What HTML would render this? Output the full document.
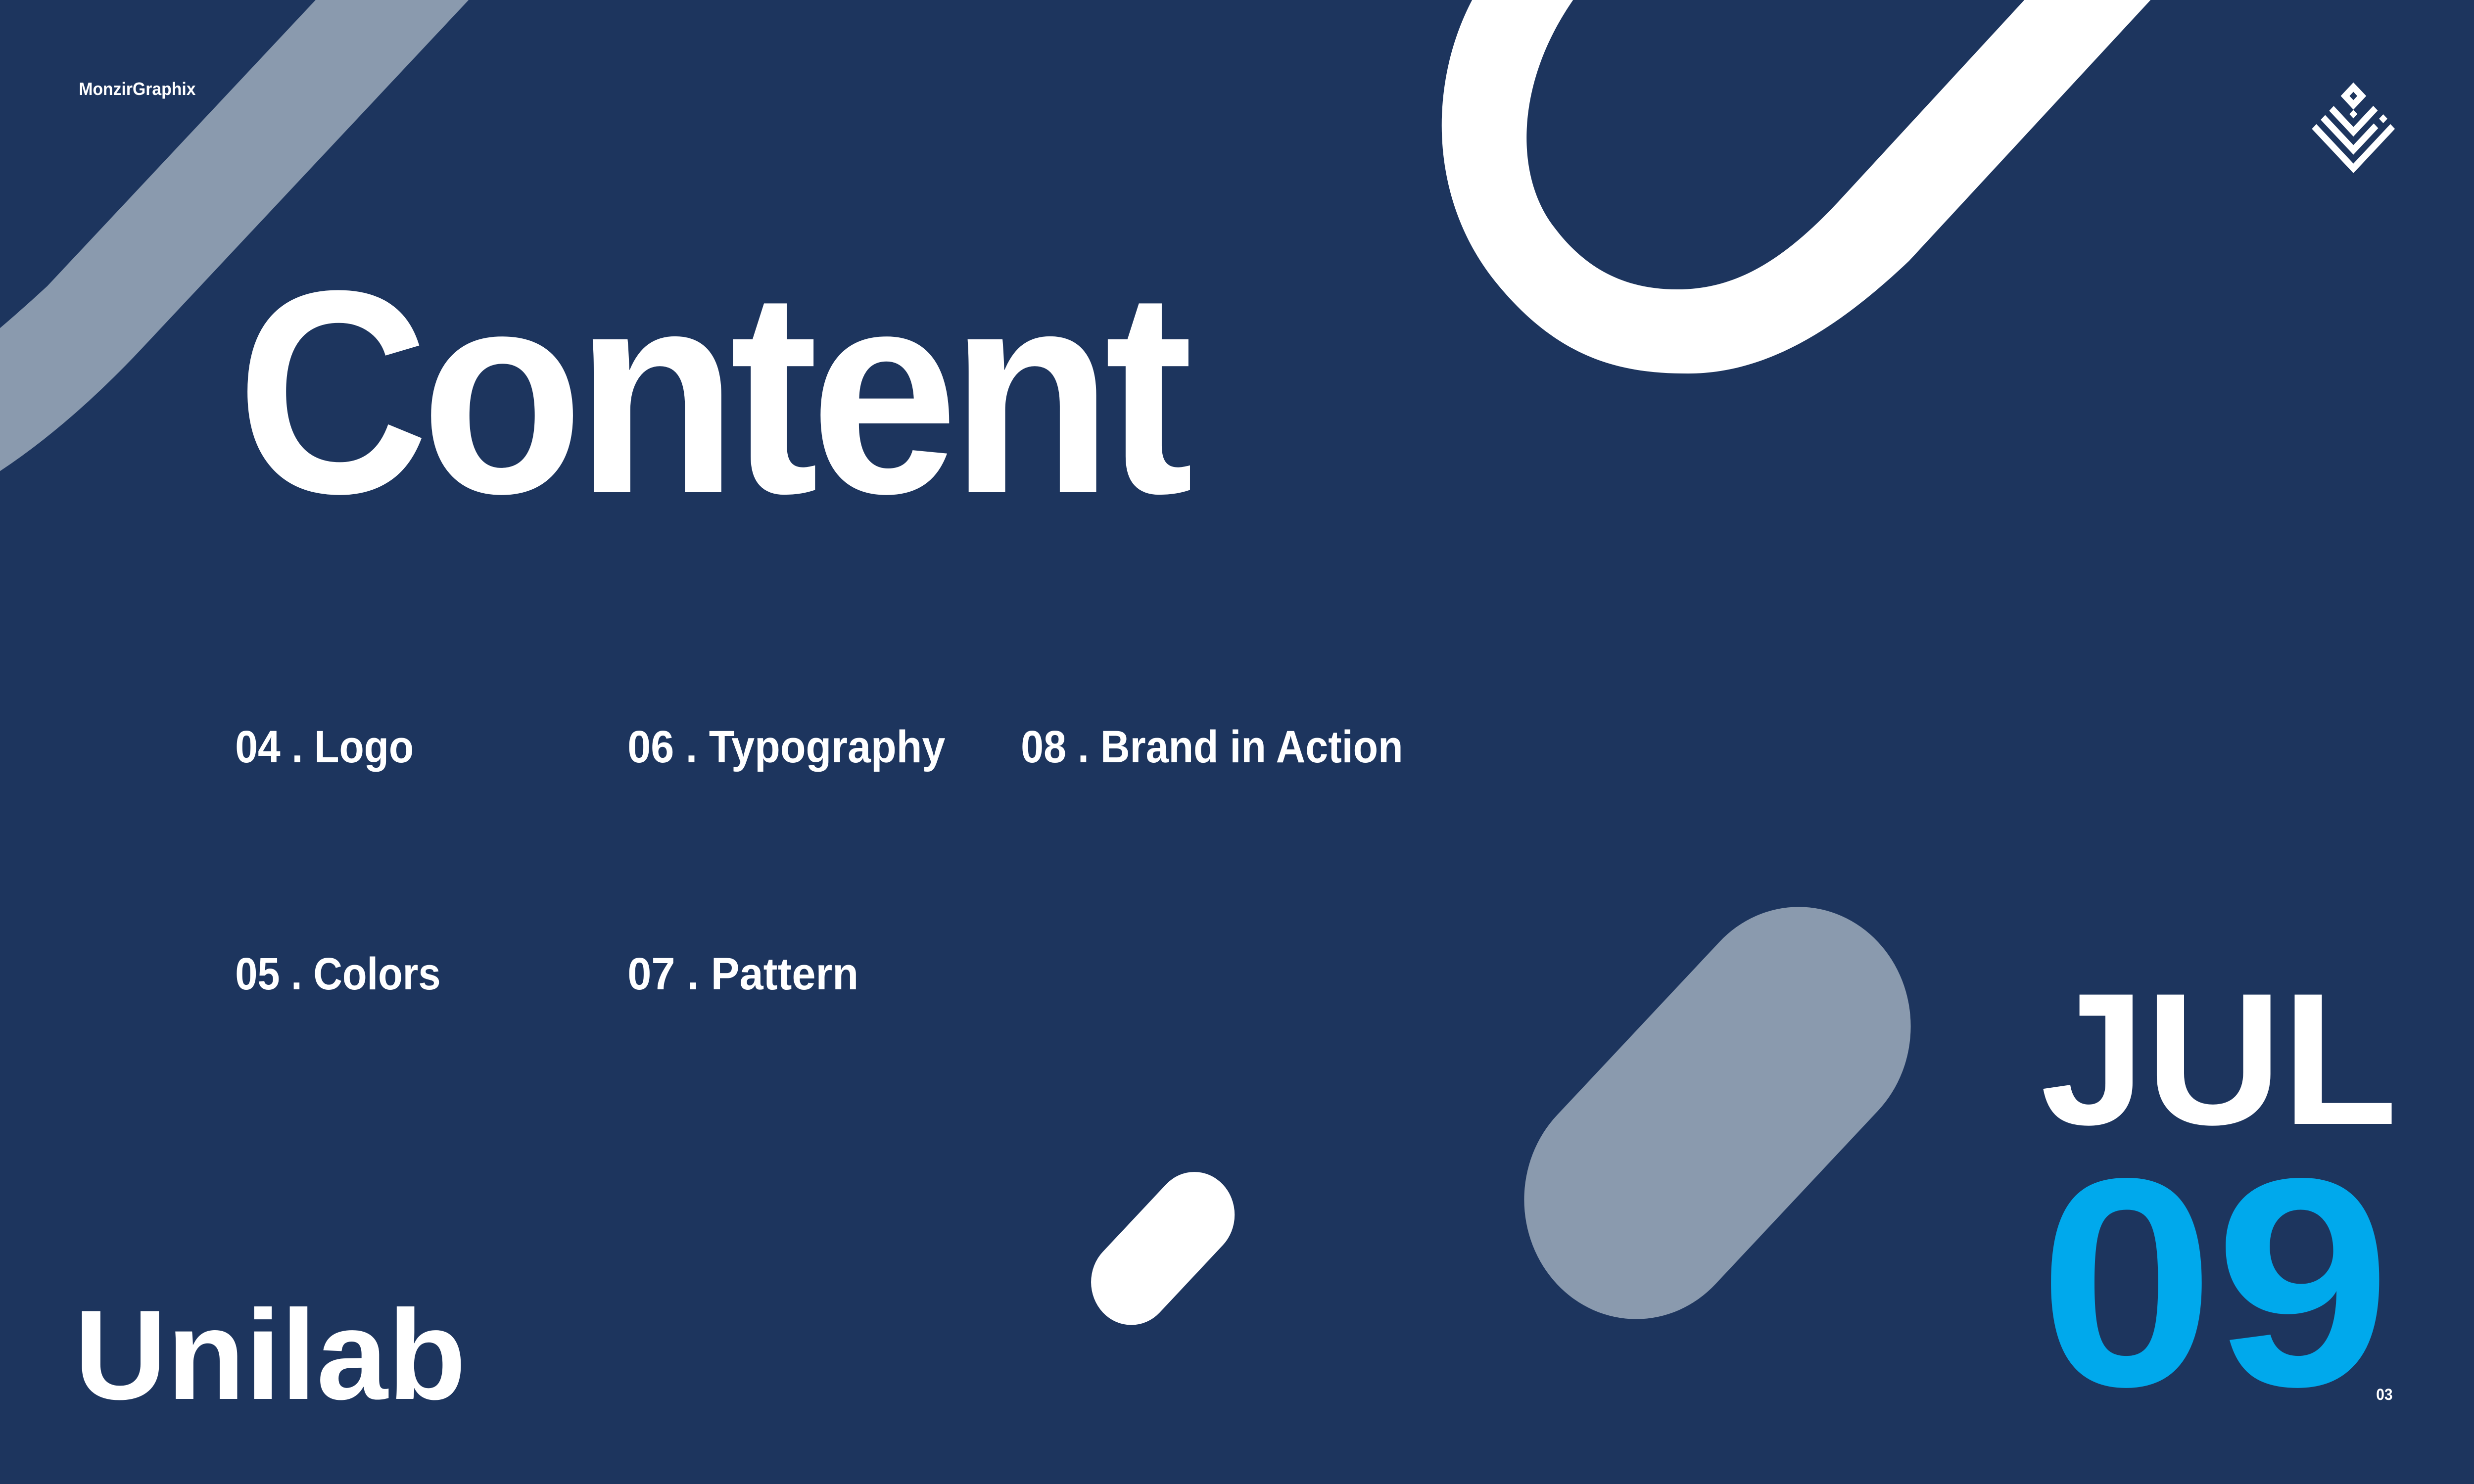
<!DOCTYPE html>
<html><head><meta charset="utf-8"><style>
html,body{margin:0;padding:0;background:#1d355e;overflow:hidden;}
body{width:100vw;height:100vh;}
svg{display:block;width:100vw;height:100vh;}
text{font-family:"Liberation Sans",sans-serif;font-weight:bold;fill:#fff;}
</style></head><body>
<svg viewBox="0 0 5334 3000" preserveAspectRatio="none" xmlns="http://www.w3.org/2000/svg">
<rect width="5334" height="3000" fill="#1d355e"/>
<g transform="scale(3.4018,3.4014)">
  <path d="M200,0 L297,0 L90,207 Q45,252 0,280 L0,195 Q15,183 30,170 Z" fill="#8a9aae"/>
  <path d="M933,0 C905,50 905,120 950,170 C990,215 1030,222 1070,222 C1120,222 1165,195 1210,155 L1363,0 L1283,0 L1165,120 C1130,155 1100,172 1063,172 C1030,172 1005,160 985,135 C960,105 960,50 997,0 Z" fill="#fff"/>
  <line x1="1140" y1="610" x2="1037" y2="713" stroke="#8a9aae" stroke-width="142" stroke-linecap="round"/>
  <line x1="757" y1="722" x2="717" y2="762" stroke="#fff" stroke-width="51" stroke-linecap="round"/>
</g>
<g transform="translate(4900,120) scale(0.3333)" fill="#fff">
  <path d="M522,140 L605,222 L522,305 L440,222 Z M522,197 L497,222 L522,247 L547,222 Z" fill-rule="evenodd"/>
  <path d="M522,306 L548,332 L522,358 L496,332 Z"/>
  <path d="M715,333 L742,360 L715,387 L688,360 Z"/>
  <g fill="none" stroke="#fff" stroke-width="41">
    <polyline points="268,407 522,661 776,407"/>
    <polyline points="325,352 522,549 668,403"/>
    <polyline points="380,297 522,439 665,296"/>
  </g>
</g>
<text x="170" y="192" font-size="36">MonzirGraphix</text>
<text x="510" y="995" font-size="585" letter-spacing="-18" textLength="2045" lengthAdjust="spacingAndGlyphs">Content</text>
<g font-size="92">
  <text x="507" y="1541" textLength="385" lengthAdjust="spacingAndGlyphs">04 . Logo</text>
  <text x="1353" y="1541" textLength="685" lengthAdjust="spacingAndGlyphs">06 . Typography</text>
  <text x="2201" y="1541" textLength="824" lengthAdjust="spacingAndGlyphs">08 . Brand in Action</text>
  <text x="507" y="2000" textLength="443" lengthAdjust="spacingAndGlyphs">05 . Colors</text>
  <text x="1353" y="2000" textLength="498" lengthAdjust="spacingAndGlyphs">07 . Pattern</text>
</g>
<text x="160" y="2828" font-size="258" textLength="845" lengthAdjust="spacingAndGlyphs">Unilab</text>
<text x="4399" y="2272" font-size="380" textLength="770" lengthAdjust="spacingAndGlyphs">JUL</text>
<text x="4395" y="2800" font-size="600" style="fill:#00a9ec" textLength="760" lengthAdjust="spacingAndGlyphs">09</text>
<text x="5123" y="2830" font-size="32">03</text>
</svg>
</body></html>
